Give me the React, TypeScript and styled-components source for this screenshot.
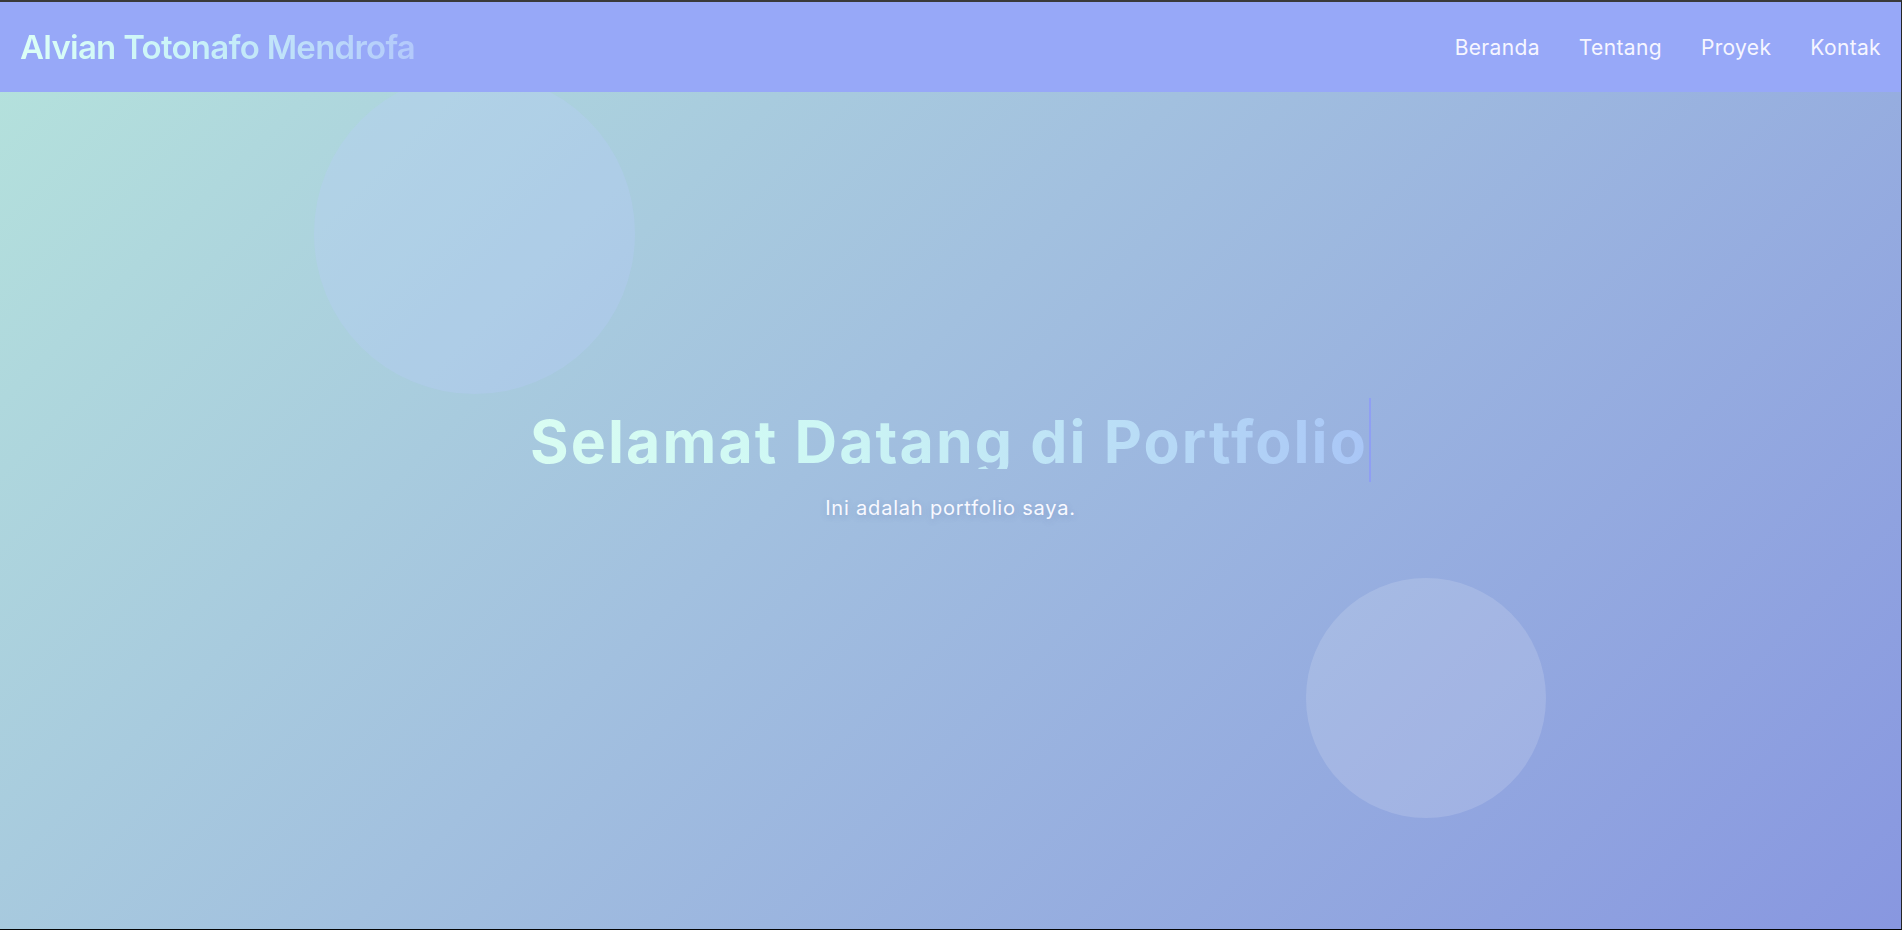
import React from "react";
import styled, { createGlobalStyle } from "styled-components";

const Global = createGlobalStyle`
  html, body { margin: 0; padding: 0; }
  body { font-family: Inter, "Noto Sans", sans-serif; background: #1e1e1e; }
  * { box-sizing: border-box; }
`;

const Frame = styled.div`
  width: 1902px;
  height: 930px;
  border-top: 2px solid #3a3a3a;
  border-right: 1px solid #262626;
  border-bottom: 1px solid #050505;
  overflow: hidden;
`;

const Stage = styled.div`
  position: relative;
  height: 100%;
`;

const Header = styled.header`
  position: absolute;
  top: 0;
  left: 0;
  right: 0;
  z-index: 10;
  height: 90px;
  background: #97a8f8;
  display: flex;
  align-items: center;
  justify-content: space-between;
  padding: 0 20px 0 20px;
`;

const Logo = styled.div`
  font-family: Inter, sans-serif;
  font-weight: 600;
  font-size: 33px;
  letter-spacing: -0.75px;
  background: linear-gradient(90deg, #dcfff6 0%, #c8f2f8 45%, #b3c9fb 100%);
  -webkit-background-clip: text;
  background-clip: text;
  color: transparent;
`;

const Nav = styled.nav`
  display: flex;
  gap: 39px;
`;

const NavLink = styled.a`
  font-family: Inter, sans-serif;
  font-size: 21px;
  font-weight: 400;
  letter-spacing: 0.35px;
  color: #f6f6ff;
  text-decoration: none;
`;

const Hero = styled.section`
  position: relative;
  height: 100%;
  background: linear-gradient(135deg, #b5e3dc 0%, #a2c0df 45%, #8897e0 100%);
  display: flex;
  flex-direction: column;
  align-items: center;
  justify-content: center;
  padding-bottom: 11px;
`;

const Bubble = styled.div<{ $size: number; $tone: string }>`
  position: absolute;
  width: ${(p) => p.$size}px;
  height: ${(p) => p.$size}px;
  border-radius: 50%;
  background: ${(p) => p.$tone};
`;

const BubbleOne = styled(Bubble)`
  top: 71px;
  left: 314px;
`;

const BubbleTwo = styled(Bubble)`
  top: 576px;
  left: 1306px;
`;

const TitleRow = styled.div`
  position: relative;
  z-index: 1;
  display: flex;
  align-items: flex-start;
  height: 84px;
`;

const Title = styled.h1`
  margin: 17px 0 0 0;
  height: 54px;
  overflow: hidden;
  font-family: Inter, sans-serif;
  font-weight: 700;
  font-size: 59px;
  line-height: 54px;
  letter-spacing: 2.1px;
  white-space: nowrap;
  background: linear-gradient(90deg, #d9fdf2 0%, #cdf7f4 35%, #bde2f6 65%, #a9c6f6 100%);
  -webkit-background-clip: text;
  background-clip: text;
  color: transparent;
`;

const Caret = styled.span`
  display: block;
  width: 2px;
  height: 84px;
  margin-left: 1px;
  background: rgba(140, 152, 250, 0.75);
`;

const Subtitle = styled.p`
  position: relative;
  z-index: 1;
  margin: 12px 0 0 0;
  font-family: Inter, sans-serif;
  font-size: 20px;
  line-height: 28px;
  letter-spacing: 0.8px;
  color: #f8f9ff;
  text-shadow: 0 2px 6px rgba(80, 100, 160, 0.25);
`;

export default function App() {
  return (
    <>
      <Global />
      <Frame>
        <Stage>
          <Header>
            <Logo>Alvian Totonafo Mendrofa</Logo>
            <Nav>
              <NavLink href="#beranda">Beranda</NavLink>
              <NavLink href="#tentang">Tentang</NavLink>
              <NavLink href="#proyek">Proyek</NavLink>
              <NavLink href="#kontak">Kontak</NavLink>
            </Nav>
          </Header>
          <Hero>
            <BubbleOne $size={321} $tone="rgba(185, 205, 255, 0.28)" />
            <BubbleTwo $size={240} $tone="rgba(255, 255, 255, 0.15)" />
            <TitleRow>
              <Title>Selamat Datang di Portfolio</Title>
              <Caret />
            </TitleRow>
            <Subtitle>Ini adalah portfolio saya.</Subtitle>
          </Hero>
        </Stage>
      </Frame>
    </>
  );
}
